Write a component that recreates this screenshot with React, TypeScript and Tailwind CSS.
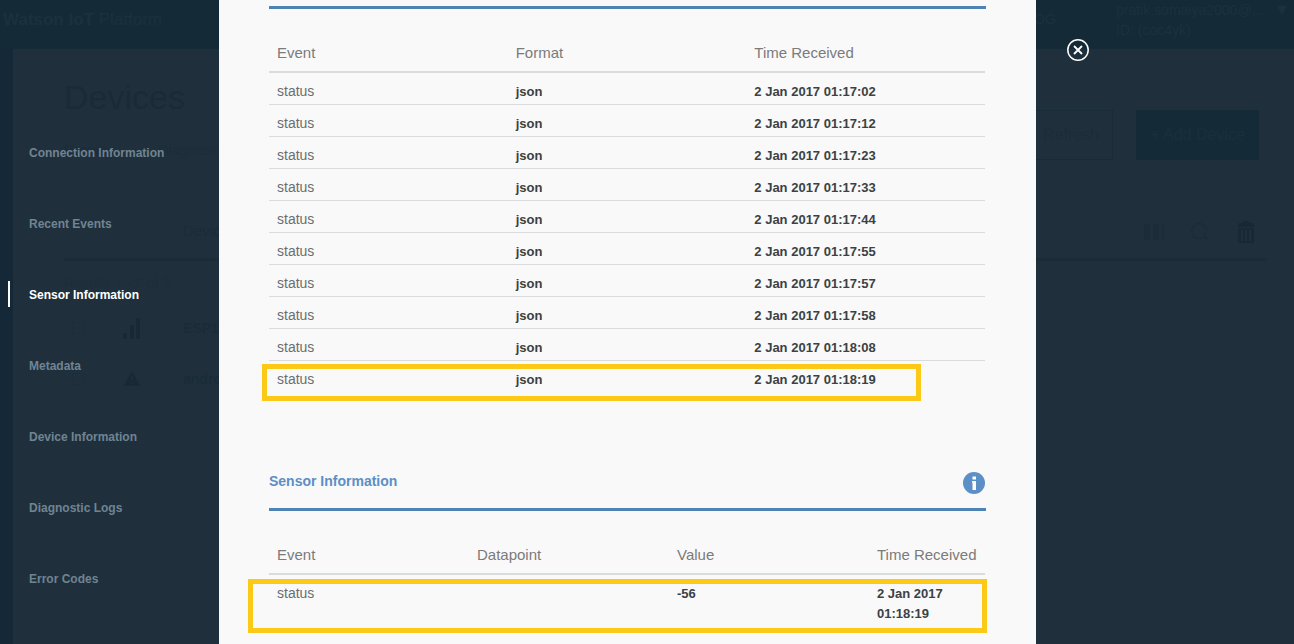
import React from "react";
import { Search, TriangleAlert } from "lucide-react";

const sections = [
  "Connection Information",
  "Recent Events",
  "Sensor Information",
  "Metadata",
  "Device Information",
  "Diagnostic Logs",
  "Error Codes",
];

const eventTimes = [
  "01:17:02",
  "01:17:12",
  "01:17:23",
  "01:17:33",
  "01:17:44",
  "01:17:55",
  "01:17:57",
  "01:17:58",
  "01:18:08",
  "01:18:19",
];

const Th = ({ children, className = "" }: { children: React.ReactNode; className?: string }) => (
  <th
    scope="col"
    className={`border-b-2 border-[#d9dcdc] px-2 pt-[34px] pb-2 text-left text-[15px] leading-5 font-normal whitespace-nowrap text-[#7b7b7b] ${className}`}
  >
    {children}
  </th>
);

const label = "px-2 pt-2 pb-[3px] align-top text-sm leading-5 text-[#6a6e70]";
const strong = "px-2 pt-[9px] pb-[2px] align-top text-[13px] leading-5 font-bold text-[#3b4144]";

// Page that stays dimmed behind the open drawer
const DevicesPage = () => (
  <div className="flex min-h-screen flex-col bg-[#152837] text-[#1a2c39]" aria-hidden="true">
    <header className="flex h-[49px] items-start justify-between bg-[#152a37] pl-[3px] text-[#1c303d]">
      <p className="pt-2 text-[17px] leading-6">
        <b>Watson IoT</b> Platform
      </p>
      <div className="flex text-sm leading-5">
        <span className="w-[99px] pt-[9px]">BLOG</span>
        <div className="w-[158px]">
          <p>pratik.somaiya2000@...</p>
          <p>ID: (coc4yk)</p>
        </div>
        <span className="w-5 text-base leading-5">▼</span>
      </div>
    </header>
    <main className="ml-[13px] flex-1 bg-[#1f303c] pr-[27px] pl-[51px]">
      <div className="flex items-start justify-between pt-[27px]">
        <div>
          <h1 className="text-[34px] leading-[42px] font-light text-[#1a2b38]">Devices</h1>
          <div className="mt-[22px] flex gap-11 text-sm leading-5 text-[#1c2d39]">
            <b>Browse</b>
            <span>Diagnose</span>
          </div>
        </div>
        <div className="flex gap-[23px] pt-[34px] pr-2 text-base">
          <button type="button" tabIndex={-1} className="h-[50px] w-[96px] border border-[#182b38] pl-3 text-[#1b2d39]">
            Refresh
          </button>
          <button type="button" tabIndex={-1} className="h-[50px] w-[123px] bg-[#152a37] text-[#1a2f3c]">
            + Add Device
          </button>
        </div>
      </div>
      <div className="mt-[60px] flex h-[41px] items-start justify-between border-b-3 border-[#1b2c37] pl-[119px]">
        <span className="pt-px text-[15px] leading-5">Device ID</span>
        <div className="flex items-center gap-[25px] pr-[11px]">
          <svg viewBox="0 0 20 18" className="h-[18px] w-5" fill="#1c2d38">
            <path d="M0 1h6v16H0zM9 1h6v16H9zM18 1h2v16h-2z" />
          </svg>
          <Search size={22} strokeWidth={2} stroke="#1c2d38" />
          <svg viewBox="0 0 20 24" className="h-6 w-5" fill="#182935">
            <path d="M7 1h6v2h4l2 4H1l2-4h4zM2 8h16v15H2zM5 10v11h2V10zM9 10v11h2V10zM13 10v11h2V10z" fillRule="evenodd" />
          </svg>
        </div>
      </div>
      <p className="mt-3 text-sm leading-5 text-[#1d2e3a]">Results 1 - 2 of 2</p>
      <div className="mt-6 flex items-center text-sm leading-5">
        <span className="ml-2 size-3 border border-[#1d2e3a]" />
        <svg viewBox="0 0 20 22" className="ml-[38px] h-[22px] w-5" fill="#182935">
          <path d="M1 16h4v6H1zM8 8h4v14H8zM14 1h4v21h-4z" />
        </svg>
        <b className="ml-[41px]">ESP12E</b>
      </div>
      <div className="mt-[30px] flex items-center text-sm leading-5">
        <span className="ml-2 size-3 border border-[#1d2e3a]" />
        <TriangleAlert size={20} fill="#182935" stroke="#1f303c" strokeWidth={2} className="ml-[38px]" />
        <b className="ml-[41px]">android</b>
      </div>
    </main>
  </div>
);

const SectionNav = () => (
  <nav aria-label="Device sections" className="w-[219px] shrink-0 pt-[139px] pl-2">
    <ul className="space-y-[45px]">
      {sections.map((name) => {
        const active = name === "Sensor Information";
        return (
          <li key={name}>
            <a
              href="#"
              aria-current={active ? "true" : undefined}
              className={`flex h-[26px] items-end border-l-2 pl-[19px] text-[12px] leading-6 font-bold ${
                active ? "border-white text-white" : "border-transparent text-[#708492]"
              }`}
            >
              {name}
            </a>
          </li>
        );
      })}
    </ul>
  </nav>
);

const RecentEvents = () => (
  <section aria-label="Recent Events" className="relative border-t-3 border-[#4d84b4] pr-px">
    <table className="w-full table-fixed border-collapse">
      <thead>
        <tr>
          <Th>Event</Th>
          <Th>Format</Th>
          <Th>Time Received</Th>
        </tr>
      </thead>
      <tbody>
        {eventTimes.map((time) => (
          <tr key={time} className="border-b border-[#d9dcdc] last:border-b-0">
            <td className={label}>status</td>
            <td className={strong}>json</td>
            <td className={strong}>2 Jan 2017 {time}</td>
          </tr>
        ))}
      </tbody>
    </table>
    <div className="pointer-events-none absolute right-[65px] -bottom-[9px] -left-[7px] h-[37px] border-5 border-[#fcc917]" />
  </section>
);

const SensorInformation = () => (
  <section className="mt-20">
    <div className="flex items-start justify-between border-b-3 border-[#4d84b4] pb-[14px]">
      <h2 className="text-sm leading-[18px] font-bold text-[#5c8fc6]">Sensor Information</h2>
      <button type="button" aria-label="About sensor information" className="mr-px">
        <svg viewBox="0 0 22 22" className="size-[22px]">
          <circle cx="11" cy="11" r="11" fill="#5c8fc6" />
          <path fill="#fff" d="M9.5 4.5h3.5v3H9.5zM9 9h4v9H9.5v-7.5H9z" />
        </svg>
      </button>
    </div>
    <div className="relative pr-px">
      <table className="w-full table-fixed border-collapse">
        <thead>
          <tr>
            <Th className="w-[200px]">Event</Th>
            <Th className="w-[200px]">Datapoint</Th>
            <Th className="w-[200px]">Value</Th>
            <Th>Time Received</Th>
          </tr>
        </thead>
        <tbody>
          <tr>
            <td className={label}>status</td>
            <td className={label} />
            <td className={strong}>-56</td>
            <td className={strong}>2 Jan 2017 01:18:19</td>
          </tr>
        </tbody>
      </table>
      <div className="pointer-events-none absolute -right-px -bottom-[7px] -left-[21px] h-[54px] border-5 border-[#fcc917]" />
    </div>
  </section>
);

export default function App() {
  return (
    <div className="relative overflow-hidden font-['Liberation_Sans',Arial,sans-serif]">
      <DevicesPage />
      {/* Drawer */}
      <div role="dialog" aria-label="Device details" className="absolute inset-0 flex">
        <SectionNav />
        <div className="min-w-0 flex-1 bg-[#f9f9f9] px-[50px] pt-[6px]">
          <RecentEvents />
          <SensorInformation />
        </div>
        <div className="w-[258px] shrink-0 pt-[39px] pl-[31px]">
          <button type="button" aria-label="Close" className="block">
            <svg viewBox="0 0 22 22" className="size-[22px]" fill="none" stroke="#fff">
              <circle cx="11" cy="11" r="10.2" strokeWidth="1.5" />
              <path d="M7 7l8 8M15 7l-8 8" strokeWidth="1.8" />
            </svg>
          </button>
        </div>
      </div>
    </div>
  );
}
